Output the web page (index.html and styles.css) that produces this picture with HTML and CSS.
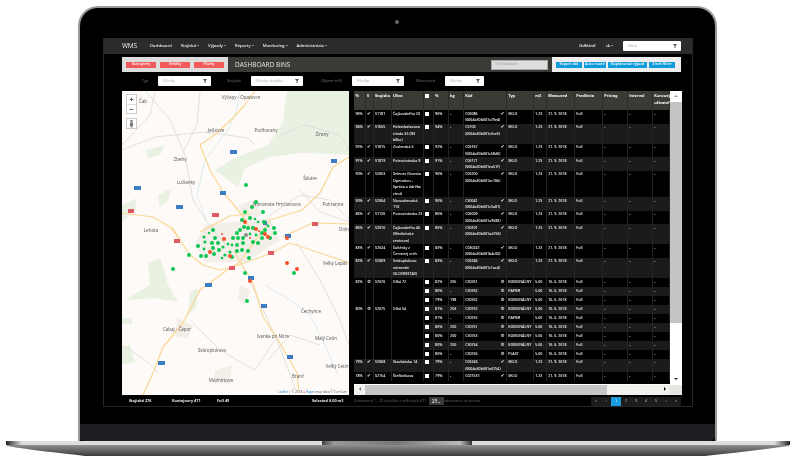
FILE: index.html
```html
<!DOCTYPE html>
<html lang="sk">
<head>
<meta charset="utf-8">
<title>WMS Dashboard Bins</title>
<link rel="stylesheet" href="styles.css">
</head>
<body>
<div class="stage">
  <div class="lid">
    <div class="camera-row"><span class="camera"></span></div>
    <div class="screen">
      <nav class="nav">
        <span class="brand">WMS</span>
        <a>Dashboard</a><a class="drop">Stojiská</a><a class="drop">Výjazdy</a><a class="drop">Reporty</a><a class="drop">Monitoring</a><a class="drop">Administrácia</a>
        <span class="nav-right"><a>Odhlásiť</a><a class="drop">sk</a><span class="select nav-select">Nitra<i class="funnel"></i></span></span>
      </nav>
      <div class="toolbar">
        <div class="tabs"><span class="red-btn">Kontajnery</span><span class="red-btn">Vehičky</span><span class="red-btn">Plochy</span></div>
        <div class="title"><h1>DASHBOARD BINS</h1><span class="search">Vyhľadávanie</span></div>
        <div class="actions"><span class="blue-btn b1">Export dát</span><span class="blue-btn b2">Auto route</span><span class="blue-btn b3">Naplánovať výjazd</span><span class="blue-btn b4">Zmeť filter</span></div>
      </div>
      <div class="filters">
        <label>Typ</label><span class="select">Všetky<i class="funnel"></i></span>
        <label>Stojisko</label><span class="select">Všetky stojiska<i class="funnel"></i></span>
        <label>Objem (m3)</label><span class="select">Všetky<i class="funnel"></i></span>
        <label>Monitored</label><span class="select">Všetky<i class="funnel"></i></span>
      </div>
      <div class="main">
        <div class="map">
          <svg class="map-svg" viewBox="122 91 227 304" width="227" height="304">
            <rect x="122" y="91" width="227" height="304" fill="#fdfaf7"/>
            <g fill="#e9f1e3">
              <path d="M287 91H349V155L333 154L300 153L270 157L245 168L238 187L215 170L235 158L268 145L283 122Z"/>
              <path d="M122 205L137 198L135 210L122 222Z"/>
              <path d="M146 150L165 145L160 155L148 158Z"/>
              <path d="M158 195L172 188L168 200L160 207Z"/>
              <path d="M148 263L160 258L168 285L178 302L155 298L125 300L150 285Z"/>
              <path d="M122 347L130 345L135 362L122 365Z"/>
              <path d="M190 292L198 288L196 308L188 315Z"/>
              <path d="M122 318H132V324H122Z"/>
            </g>
            <g fill="#f3eee7">
              <path d="M238 205L256 200L262 215L245 222Z"/>
              <path d="M205 225L270 218L280 240L245 262L205 262L195 245Z"/>
              <path d="M177 318L193 325L188 338L176 336Z"/>
              <path d="M215 370L232 365L230 385L214 380Z"/>
              <path d="M240 285L250 290L245 305L238 300Z"/>
            </g>
            <g fill="none" stroke="#dcdad6" stroke-width="0.8">
              <path d="M146 91L170 120L185 155L193 200L207 222L226 245"/>
              <path d="M250 281L277 340L297 393"/>
              <path d="M122 150L155 137L205 132L248 138L255 145"/>
              <path d="M280 135L305 125L340 135L349 150"/>
              <path d="M122 145L150 115L155 91"/>
              <path d="M297 243L320 280L340 320L349 345"/>
              <path d="M190 320L220 350L255 370L275 340"/>
              <path d="M122 345L145 360L158 372"/>
              <path d="M268 360L290 335L320 345"/>
              <path d="M200 91L197 125L184 150"/>
              <path d="M270 215L300 195L330 200L349 220"/>
              <path d="M300 190L320 212L349 222"/>
            </g>
            <g fill="none" stroke="#cfe3ee" stroke-width="0.7">
              <path d="M240 91L236 112L228 130L205 160L197 195L207 222"/>
              <path d="M265 285L290 300L310 315L325 345L338 375"/>
            </g>
            <g fill="none" stroke="#fbd795" stroke-width="1.2" stroke-linejoin="round">
              <path d="M255 91L243 107L233 118L217 133L200 145L210 170L223 192L242 215L250 228"/>
              <path d="M122 213L153 217L170 227L180 240L190 255L203 265L220 270L230 268L272 253L290 243L320 253L349 263"/>
              <path d="M230 268L240 262L270 220L302 210L320 193L333 167L349 157"/>
              <path d="M282 237L313 223L349 224"/>
              <path d="M235 250L237 257L253 283L263 317L280 343L297 373L299 395"/>
              <path d="M230 268L200 290L183 323L163 347L153 373L143 395"/>
              <path d="M180 240L172 227M200 232L230 216L250 214"/>
            </g>
            <g class="shields-blue" fill="#3c7cc6">
              <rect x="230" y="150" width="7" height="4"/><rect x="134" y="186" width="7" height="4"/><rect x="176" y="205" width="7" height="4"/>
              <rect x="220" y="191" width="6" height="4"/><rect x="331" y="159" width="6" height="4"/><rect x="285" y="234" width="6" height="4"/>
              <rect x="205" y="283" width="7" height="4"/><rect x="158" y="361" width="7" height="4"/><rect x="261" y="304" width="6" height="4"/><rect x="287" y="355" width="6" height="4"/><rect x="248" y="276" width="6" height="4"/><rect x="263" y="221" width="4" height="4"/>
            </g>
            <g class="shields-red" fill="#de5b66">
              <rect x="128" y="209" width="6" height="4"/><rect x="212" y="213" width="7" height="4"/><rect x="174" y="239" width="6" height="4"/>
              <rect x="312" y="222" width="6" height="4"/><rect x="229" y="266" width="6" height="4"/><rect x="268" y="251" width="6" height="4"/>
            </g>
            <g class="labels">
              <text x="241" y="99" text-anchor="middle">Výčapy - Opatovce</text><text x="143" y="103" text-anchor="middle">Čab</text>
              <text x="216" y="132" text-anchor="middle">Jelšovce</text><text x="266" y="132" text-anchor="middle">Podhorany</text>
              <text x="322" y="136" text-anchor="middle">Žirany</text><text x="180" y="161" text-anchor="middle">Zbehy</text>
              <text x="186" y="184" text-anchor="middle">Lužianky</text><text x="310" y="180" text-anchor="middle">Štitáre</text>
              <text x="333" y="206" text-anchor="middle">Pohranice</text><text x="339" y="231">Dolné</text>
              <text x="151" y="232" text-anchor="middle">Lehota</text><text x="277" y="206" text-anchor="middle">Nitrianske Hrnčiarovce</text>
              <text x="335" y="265" text-anchor="middle">Veľký Lapáš</text><text x="311" y="313" text-anchor="middle">Čechynce</text>
              <text x="326" y="340" text-anchor="middle">Malý Cetín</text><text x="337" y="368" text-anchor="middle">Veľký Cetín</text>
              <text x="177" y="331" text-anchor="middle">Cabaj - Čápor</text><text x="212" y="352" text-anchor="middle">Svätoplukovo</text>
              <text x="221" y="382" text-anchor="middle">Mojmírovce</text><text x="298" y="378" text-anchor="middle">Branč</text>
              <text x="273" y="338" text-anchor="middle">Ivanka pri Nitre</text>
            </g>
            <g fill="#0bc653">
              <circle cx="246" cy="185" r="2"/><circle cx="256" cy="202" r="2"/><circle cx="252" cy="207" r="2"/><circle cx="263" cy="212" r="2"/><circle cx="245" cy="212" r="2"/><circle cx="250" cy="218" r="2"/><circle cx="242" cy="220" r="2"/><circle cx="264" cy="222" r="2"/><circle cx="274" cy="228" r="2"/><circle cx="275" cy="233" r="2"/><circle cx="213" cy="230" r="2"/><circle cx="204" cy="237" r="1.6"/><circle cx="215" cy="238" r="2"/><circle cx="212" cy="243" r="2"/><circle cx="205" cy="242" r="1.6"/><circle cx="218" cy="243" r="2"/><circle cx="198" cy="246" r="2"/><circle cx="213" cy="248" r="2"/><circle cx="219" cy="250" r="2"/><circle cx="201" cy="256" r="2"/><circle cx="206" cy="256" r="2"/><circle cx="214" cy="254" r="2"/><circle cx="223" cy="247" r="1.6"/><circle cx="230" cy="252" r="1.6"/><circle cx="232" cy="257" r="2"/><circle cx="225" cy="255" r="1.6"/><circle cx="248" cy="251" r="2"/><circle cx="249" cy="258" r="2"/><circle cx="245" cy="273" r="2"/><circle cx="294" cy="273" r="2"/><circle cx="237" cy="233" r="2"/><circle cx="233" cy="238" r="2"/><circle cx="238" cy="238" r="2"/><circle cx="243" cy="238" r="2"/><circle cx="237" cy="245" r="2"/><circle cx="242" cy="250" r="2"/><circle cx="237" cy="251" r="2"/><circle cx="243" cy="243" r="2"/><circle cx="248" cy="228" r="2"/><circle cx="253" cy="228" r="2"/><circle cx="244" cy="227" r="2"/><circle cx="240" cy="230" r="2"/><circle cx="262" cy="233" r="2"/><circle cx="265" cy="230" r="2"/><circle cx="270" cy="238" r="2"/><circle cx="253" cy="242" r="2"/><circle cx="258" cy="243" r="2"/><circle cx="262" cy="238" r="2"/><circle cx="189" cy="255" r="2"/><circle cx="173" cy="269" r="2"/><circle cx="247" cy="301" r="2"/><circle cx="204" cy="249" r="1.4"/><circle cx="228" cy="244" r="1.4"/><circle cx="256" cy="235" r="1.4"/><circle cx="268" cy="226" r="1.4"/><circle cx="209" cy="233" r="1.3"/><circle cx="222" cy="258" r="1.3"/><circle cx="255" cy="219" r="1.3"/><circle cx="250" cy="234" r="1.4"/><circle cx="232" cy="245" r="1.4"/><circle cx="258" cy="222" r="1.3"/>
            </g>
            <g fill="#f4502a">
              <circle cx="245" cy="222" r="2"/><circle cx="224" cy="239" r="2"/><circle cx="210" cy="252" r="2"/><circle cx="230" cy="256" r="2"/><circle cx="256" cy="229" r="2"/><circle cx="265" cy="234" r="2"/><circle cx="268" cy="237" r="2"/><circle cx="287" cy="238" r="2"/><circle cx="287" cy="263" r="2"/><circle cx="297" cy="269" r="2"/><circle cx="250" cy="281" r="2"/><circle cx="259" cy="231" r="1"/><circle cx="250" cy="238" r="1"/><circle cx="222" cy="234" r="1"/>
            </g>
            <circle cx="246" cy="235" r="2" fill="#8c8c8c"/>
          </svg>
          <div class="zoom-ctl"><b>+</b><b>−</b></div>
          <div class="pegman"><svg viewBox="0 0 10 10" width="9" height="9"><circle cx="5" cy="2.2" r="1.4" fill="#777"/><path d="M3.5 4H6.5L7 7.5H6V9.5H4V7.5H3Z" fill="#777"/></svg></div>
          <div class="attrib"><a>Leaflet</a> | © 2018 <em>●</em> <a>Rúget</a> map data © TomTom</div>
        </div>
        <div class="data">
          <div class="data-top">
            <table class="grid">
              <colgroup><col class="c11"><col class="c8"><col class="c18"><col class="c32"><col class="c10"><col class="c15"><col class="c15"><col class="c43"><col class="c27"><col class="c13"><col class="c28"><col class="c28"><col class="c25"><col class="c25"><col class="c17"></colgroup>
              <thead><tr><th>%</th><th>S</th><th>Stojisko</th><th>Ulica</th><th><i class="box"></i></th><th>%</th><th>kg</th><th>Kód</th><th>Typ</th><th>m3</th><th>Measured</th><th>Predikcia</th><th>Pricing</th><th>Interval</th><th>Koncový užívateľ</th></tr></thead>
              <tbody>
                <tr><td>96%</td><td class="ck">✔</td><td>S1181</td><td>Čajkovského 20</td><td><i class="box"></i></td><td>96%</td><td>-</td><td class="code"><s>✔</s>C05086 (0004a30b001c29e4)</td><td>SKLO</td><td>1.23</td><td>21. 9. 2018</td><td>Full</td><td>-</td><td>-</td><td>-</td></tr>
                <tr><td>94%</td><td class="ck">✔</td><td>S1655</td><td>Hviezdoslavova trieda 35 (NS bílko)</td><td><i class="box"></i></td><td>94%</td><td>-</td><td class="code"><s>✔</s>C5103 (0004a30b001c3ce5)</td><td>SKLO</td><td>1.23</td><td>21. 9. 2018</td><td>Full</td><td>-</td><td>-</td><td>-</td></tr>
                <tr><td>92%</td><td class="ck">✔</td><td>S1815</td><td>Zvolenská 5</td><td><i class="box"></i></td><td>92%</td><td>-</td><td class="code"><s>✔</s>C05167 (0004a30b001c58d6)</td><td>SKLO</td><td>1.23</td><td>21. 9. 2018</td><td>Full</td><td>-</td><td>-</td><td>-</td></tr>
                <tr><td>91%</td><td class="ck">✔</td><td>S1819</td><td>Potravinárska 9</td><td><i class="box"></i></td><td>91%</td><td>-</td><td class="code"><s>✔</s>C05171 (0004a30b001ea51f)</td><td>SKLO</td><td>1.23</td><td>21. 9. 2018</td><td>Full</td><td>-</td><td>-</td><td>-</td></tr>
                <tr><td>90%</td><td class="ck">✔</td><td>S2053</td><td>Selenec (Gramia Operation - Správa a údržba ciest)</td><td><i class="box"></i></td><td>90%</td><td>-</td><td class="code"><s>✔</s>C05200 (0004a30b001ac10b)</td><td>SKLO</td><td>1.23</td><td>21. 9. 2018</td><td>Full</td><td>-</td><td>-</td><td>-</td></tr>
                <tr><td>90%</td><td class="ck">✔</td><td>S2004</td><td>Novozámocká<br>110</td><td><i class="box"></i></td><td>90%</td><td>-</td><td class="code"><s>✔</s>C30041 (0004a30b001c3a81)</td><td>SKLO</td><td>1.23</td><td>21. 9. 2018</td><td>Full</td><td>-</td><td>-</td><td>-</td></tr>
                <tr><td>86%</td><td class="ck">✔</td><td>S1126</td><td>Potravinárska 23</td><td><i class="box"></i></td><td>86%</td><td>-</td><td class="code"><s>✔</s>C05009 (0004a30b001a9588)</td><td>SKLO</td><td>1.23</td><td>21. 9. 2018</td><td>Full</td><td>-</td><td>-</td><td>-</td></tr>
                <tr><td>86%</td><td class="ck">✔</td><td>S2010</td><td>Čajkovského 46 (Medicínske centrum)</td><td><i class="box"></i></td><td>86%</td><td>-</td><td class="code"><s>✔</s>C30101 (0004a30b001ad756)</td><td>SKLO</td><td>1.23</td><td>21. 9. 2018</td><td>Full</td><td>-</td><td>-</td><td>-</td></tr>
                <tr><td>83%</td><td class="ck">✔</td><td>S2024</td><td>Šoltésky z Červenej vrch</td><td><i class="box"></i></td><td>83%</td><td>-</td><td class="code"><s>✔</s>C030241 (0004a30b001b4c00)</td><td>SKLO</td><td>1.23</td><td>21. 9. 2018</td><td>Full</td><td>-</td><td>-</td><td>-</td></tr>
                <tr><td>82%</td><td class="ck">✔</td><td>S2069</td><td>Svätoplukovo námestie (SLOVRESTAV)</td><td><i class="box"></i></td><td>83%</td><td>-</td><td class="code"><s>✔</s>C05246 (0004a30b001c1ac4)</td><td>SKLO</td><td>1.23</td><td>21. 9. 2018</td><td>Full</td><td>-</td><td>-</td><td>-</td></tr>
                <tr class="one"><td rowspan="3" class="span">82%</td><td rowspan="3" class="span ck">⚙</td><td rowspan="3" class="span">S2076</td><td rowspan="3" class="span">Dlhá 72</td><td><i class="box"></i></td><td>82%</td><td>205</td><td class="code"><s>⚙</s>C30761</td><td>KOMUNÁLNY</td><td>5.00</td><td>16. 6. 2018</td><td>Full</td><td>-</td><td>-</td><td>-</td></tr>
                <tr class="one"><td><i class="box"></i></td><td>80%</td><td>-</td><td class="code"><s>⚙</s>C30762</td><td>PAPIER</td><td>5.00</td><td>16. 6. 2018</td><td>Full</td><td>-</td><td>-</td><td>-</td></tr>
                <tr class="one"><td><i class="box"></i></td><td>79%</td><td>198</td><td class="code"><s>⚙</s>C30762</td><td>KOMUNÁLNY</td><td>5.00</td><td>16. 6. 2018</td><td>Full</td><td>-</td><td>-</td><td>-</td></tr>
                <tr class="one"><td rowspan="6" class="span">80%</td><td rowspan="6" class="span ck">⚙</td><td rowspan="6" class="span">S2075</td><td rowspan="6" class="span">Dlhá 54</td><td><i class="box"></i></td><td>81%</td><td>203</td><td class="code"><s>⚙</s>C30752</td><td>KOMUNÁLNY</td><td>5.00</td><td>16. 6. 2018</td><td>Full</td><td>-</td><td>-</td><td>-</td></tr>
                <tr class="one"><td><i class="box"></i></td><td>81%</td><td>-</td><td class="code"><s>⚙</s>C30755</td><td>PAPIER</td><td>5.00</td><td>16. 6. 2018</td><td>Full</td><td>-</td><td>-</td><td>-</td></tr>
                <tr class="one"><td><i class="box"></i></td><td>80%</td><td>200</td><td class="code"><s>⚙</s>C30751</td><td>KOMUNÁLNY</td><td>5.00</td><td>16. 6. 2018</td><td>Full</td><td>-</td><td>-</td><td>-</td></tr>
                <tr class="one"><td><i class="box"></i></td><td>80%</td><td>200</td><td class="code"><s>⚙</s>C30753</td><td>KOMUNÁLNY</td><td>5.00</td><td>16. 6. 2018</td><td>Full</td><td>-</td><td>-</td><td>-</td></tr>
                <tr class="one"><td><i class="box"></i></td><td>80%</td><td>200</td><td class="code"><s>⚙</s>C30754</td><td>KOMUNÁLNY</td><td>5.00</td><td>16. 6. 2018</td><td>Full</td><td>-</td><td>-</td><td>-</td></tr>
                <tr class="one"><td><i class="box"></i></td><td>80%</td><td>-</td><td class="code"><s>⚙</s>C30756</td><td>PLAST</td><td>5.00</td><td>16. 6. 2018</td><td>Full</td><td>-</td><td>-</td><td>-</td></tr>
                <tr><td>79%</td><td class="ck">✔</td><td>S2068</td><td>Stavbárska 14</td><td><i class="box"></i></td><td>79%</td><td>-</td><td class="code"><s>✔</s>C05243 (0004a30b001a6754)</td><td>SKLO</td><td>1.23</td><td>21. 9. 2018</td><td>Full</td><td>-</td><td>-</td><td>-</td></tr>
                <tr><td>78%</td><td class="ck">✔</td><td>S2154</td><td>Štefánikova</td><td><i class="box"></i></td><td>79%</td><td>-</td><td class="code"><s>✔</s>C021531</td><td>SKLO</td><td>1.23</td><td>21. 9. 2018</td><td>Full</td><td>-</td><td>-</td><td>-</td></tr>
              </tbody>
            </table>
            <div class="vbar"><span class="arrow up"></span><span class="vthumb"></span><span class="arrow down"></span></div>
          </div>
          <div class="hbar"><span class="arrow left"></span><span class="hthumb"></span><span class="arrow right"></span><span class="corner"></span></div>
        </div>
      </div>
      <div class="footer">
        <span class="stats s1">Stojiská 276</span><span class="stats s2">Kontajnery 471</span><span class="stats s3">Full 49</span><span class="stats s4">Selected 0.00 m3</span>
        <span class="info">Zobrazená 1 - 25 položka z celkových 471</span><span class="per-page">25<i></i></span><span class="info">záznamov na stranu</span>
        <span class="pager"><a>«</a><a>‹</a><a class="on">1</a><a>2</a><a>3</a><a>4</a><a>5</a><a>›</a><a>»</a></span>
      </div>
    </div>
    <div class="chin"></div>
  </div>
  <svg class="base" viewBox="0 0 800 16" width="800" height="16">
    <defs>
      <linearGradient id="body" x1="0" y1="0" x2="0" y2="1"><stop offset="0" stop-color="#b5b5b5"/><stop offset="0.45" stop-color="#7a7a7a"/><stop offset="1" stop-color="#3a3a3a"/></linearGradient>
      <linearGradient id="notch" x1="0" y1="0" x2="1" y2="0"><stop offset="0" stop-color="#444"/><stop offset="0.08" stop-color="#999"/><stop offset="0.5" stop-color="#777"/><stop offset="0.92" stop-color="#bbb"/><stop offset="1" stop-color="#333"/></linearGradient>
      <linearGradient id="tip" x1="0" y1="0" x2="1" y2="0"><stop offset="0" stop-color="#222"/><stop offset="0.02" stop-color="#ddd"/><stop offset="0.98" stop-color="#ddd"/><stop offset="1" stop-color="#222"/></linearGradient>
    </defs>
    <path d="M6 0H790L789 5C760 9 735 12 705 15H85C60 12 30 9 7 5Z" fill="url(#body)"/>
    <rect x="6" y="0" width="784" height="4" fill="url(#tip)"/>
    <rect x="322" y="0" width="150" height="4" fill="url(#notch)"/>
    <rect x="195" y="11" width="10" height="1" fill="#555"/><rect x="590" y="11" width="10" height="1" fill="#555"/>
  </svg>
</div>
</body>
</html>
```
FILE: styles.css
```css
* { box-sizing: border-box; }
html, body { margin: 0; padding: 0; background: #fff; }
body { width: 800px; height: 467px; overflow: hidden; font-family: "Open Sans", "Liberation Sans", sans-serif; font-size: 3.8px; line-height: 6.5px; color: #fff; }
.stage { display: flex; flex-direction: column; align-items: flex-start; padding-top: 6px; }

.lid { width: 639px; height: 435px; margin-left: 78px; background: #000; border: 2px solid #999; border-bottom: 0; border-radius: 20px 20px 0 0; display: flex; flex-direction: column; padding: 0 22px 0 23px; }
.camera-row { height: 30px; display: flex; align-items: center; justify-content: center; padding-right: 2px; }
.camera { width: 4px; height: 4px; border-radius: 50%; background: #666; margin-top: -2px; }
.screen { height: 369px; background: #000; border: solid #262626; border-width: 0 1px 1px; display: flex; flex-direction: column; filter: blur(0.25px); }
.chin { height: 17px; margin: 17px -22px 0 -23px; background: #1d1e22; border-radius: 0 0 5px 3px; }
.base { display: block; flex: none; }

.nav { height: 16px; flex: none; background: #2b2b2b; display: flex; align-items: center; padding-left: 18px; padding-right: 11px; font-size: 4.1px; font-weight: 600; color: #eee; }
.nav a { margin-right: 9px; white-space: nowrap; }
.nav a.drop::after { content: ""; display: inline-block; margin-left: 1px; border: 1px solid transparent; border-top-color: #eee; border-bottom: 0; vertical-align: middle; }
.brand { font-size: 6.5px; width: 28px; font-weight: 400; letter-spacing: -0.2px; }
.nav-right { margin-left: auto; display: flex; align-items: center; }
.nav-right a { margin-right: 10px; }

.select { position: relative; display: flex; align-items: center; background: #fff; color: #aaa; padding-left: 5px; height: 10px; border-radius: 1px; font-weight: 400; font-size: 4px; }
.nav-select { width: 58px; margin-left: 0; }
.funnel { position: absolute; right: 4px; top: 3px; width: 4px; height: 4px; background: #555; clip-path: polygon(0 0, 100% 0, 62% 50%, 62% 100%, 38% 100%, 38% 50%); }

.toolbar { height: 15px; flex: none; margin: 3px 11px 0 18px; display: flex; }
.tabs { width: 106px; background: #ddd; display: flex; align-items: center; gap: 4px; padding-left: 4px; }
.red-btn { width: 30px; height: 6px; background: #f25a5a; display: flex; align-items: center; justify-content: center; font-weight: 600; font-size: 3.4px; }
.title { flex: 1; background: #3a3a36; display: flex; align-items: center; justify-content: space-between; padding: 0 4px 0 7px; }
.title h1 { margin: 0; font-size: 6.5px; font-weight: 400; color: #e4e4e4; line-height: 10px; }
.search { width: 57px; height: 10px; background: #ddd; border: 1px solid #aaa; color: #999; padding-left: 3px; display: flex; align-items: center; }
.actions { width: 129px; background: #eee; display: flex; align-items: center; padding-left: 4px; gap: 2px; }
.blue-btn { height: 6px; background: #0e9bdc; display: flex; align-items: center; justify-content: center; font-size: 3.8px; font-weight: 600; white-space: nowrap; }
.b1 { width: 26px; } .b2 { width: 22px; } .b3 { width: 39px; } .b4 { width: 26px; }

.filters { height: 10px; flex: none; margin: 4px 0 0 18px; display: grid; grid-template-columns: 36px 53px 40px 52px 49px 52px 41px 39px; align-items: center; }
.filters label { text-align: right; padding-right: 10px; color: #777; white-space: nowrap; }

.main { height: 304px; flex: none; margin: 5px 11px 0 18px; display: flex; justify-content: space-between; }
.map { position: relative; width: 227px; height: 304px; overflow: hidden; background: #fdfaf7; }
.map-svg { display: block; }
.labels text { font-size: 4.5px; fill: #555; }
.zoom-ctl { position: absolute; left: 4px; top: 3px; width: 11px; height: 20px; background: #fff; border: 1px solid #ccc; display: flex; flex-direction: column; color: #333; font-size: 7px; line-height: 9px; text-align: center; }
.zoom-ctl b + b { border-top: 1px solid #ddd; }
.pegman { position: absolute; left: 4px; top: 27px; width: 11px; height: 11px; background: #fff; border: 1px solid #ccc; }
.pegman svg { display: block; }
.attrib { position: absolute; right: 2px; bottom: 0; font-size: 3.2px; line-height: 5px; background: rgba(255,255,255,.7); color: #555; white-space: nowrap; }
.attrib a { color: #2a86c8; }
.attrib em { color: #e33; font-style: normal; }

.data { width: 329px; height: 304px; display: flex; flex-direction: column; margin-right: -2px; }
.data-top { height: 293px; display: flex; overflow: hidden; background: #000; }
.grid { width: 316px; height: max-content; table-layout: fixed; border-collapse: collapse; flex: none; }
.c11 { width: 11px; } .c8 { width: 8px; } .c18 { width: 18px; } .c32 { width: 32px; } .c10 { width: 10px; } .c15 { width: 15px; } .c43 { width: 43px; } .c27 { width: 27px; } .c13 { width: 13px; } .c28 { width: 28px; } .c25 { width: 25px; } .c17 { width: 17px; }
.grid th { height: 19px; background: #3b3b36; font-size: 3.8px; font-weight: 700; text-align: left; vertical-align: top; padding: 2px 0 0 1.5px; border-right: 0.5px solid #2c2c29; }
.grid td { height: 9px; padding: 0.5px 0 0 1.5px; vertical-align: top; border-right: 0.5px solid #242424; color: #f6f6f6; font-size: 3.6px; font-weight: 600; overflow: hidden; }
.grid tbody tr:nth-child(odd) td { background: #000; }
.grid tbody tr:nth-child(even) td { background: #1b1b1b; }
.grid tbody tr:nth-child(n) td.span { background: #000; padding-top: 1.5px; }
.one td { padding-top: 1.5px; }
.grid .ck { font-family: "DejaVu Sans", sans-serif; font-size: 4.6px; text-align: center; padding-left: 0; }
.code s { float: right; margin-right: 1px; text-decoration: none; font-family: "DejaVu Sans", sans-serif; font-size: 4.6px; }
.box { display: block; width: 4px; height: 4px; margin-top: 1px; background: #fff; }

.vbar { width: 13px; display: flex; flex-direction: column; background: #fff; position: relative; margin-right: 1px; }
.vthumb { height: 221px; margin: 11px 0 0; background: #c4c4c4; }
.arrow { position: absolute; width: 0; height: 0; border: 2.5px solid transparent; }
.up { top: 2px; left: 4px; border-bottom-color: #999; }
.down { bottom: 2px; left: 4px; border-top-color: #222; }
.hbar { position: relative; height: 11px; margin-top: 0; margin-right: 1px; background: #f1f1ee; border-top: 1px solid #fff; }
.hthumb { position: absolute; left: 11px; top: 0; width: 242px; height: 10px; background: #c6c6c6; }
.left { left: 3px; top: 2px; border-right-color: #777; }
.right { right: 14px; top: 2px; border-left-color: #111; }
.corner { position: absolute; right: 0; top: 0; width: 13px; height: 10px; background: #e5e5e2; }

.footer { flex: 1; position: relative; display: flex; align-items: center; padding-top: 1px; margin: 0 11px 0 0; color: #999; }
.stats { color: #eee; font-weight: 700; white-space: nowrap; }
.s1 { margin-left: 25px; width: 43px; } .s2 { width: 45px; } .s3 { width: 95px; } .s4 { width: 42px; }
.info { white-space: nowrap; color: #666; }
.per-page { width: 15px; height: 8px; margin: 0 1px 0 2px; background: #3b3b3b; color: #fff; display: flex; align-items: center; justify-content: center; gap: 1px; font-size: 5px; flex: none; }
.per-page i { border: 1px solid transparent; border-top-color: #fff; border-bottom: 0; margin-top: 2px; }
.pager { margin-left: auto; display: flex; }
.pager a { width: 10px; height: 9px; background: #1c1c1c; color: #ccc; display: flex; align-items: center; justify-content: center; }
.pager a.on { background: #1a9ce0; color: #fff; }
```
